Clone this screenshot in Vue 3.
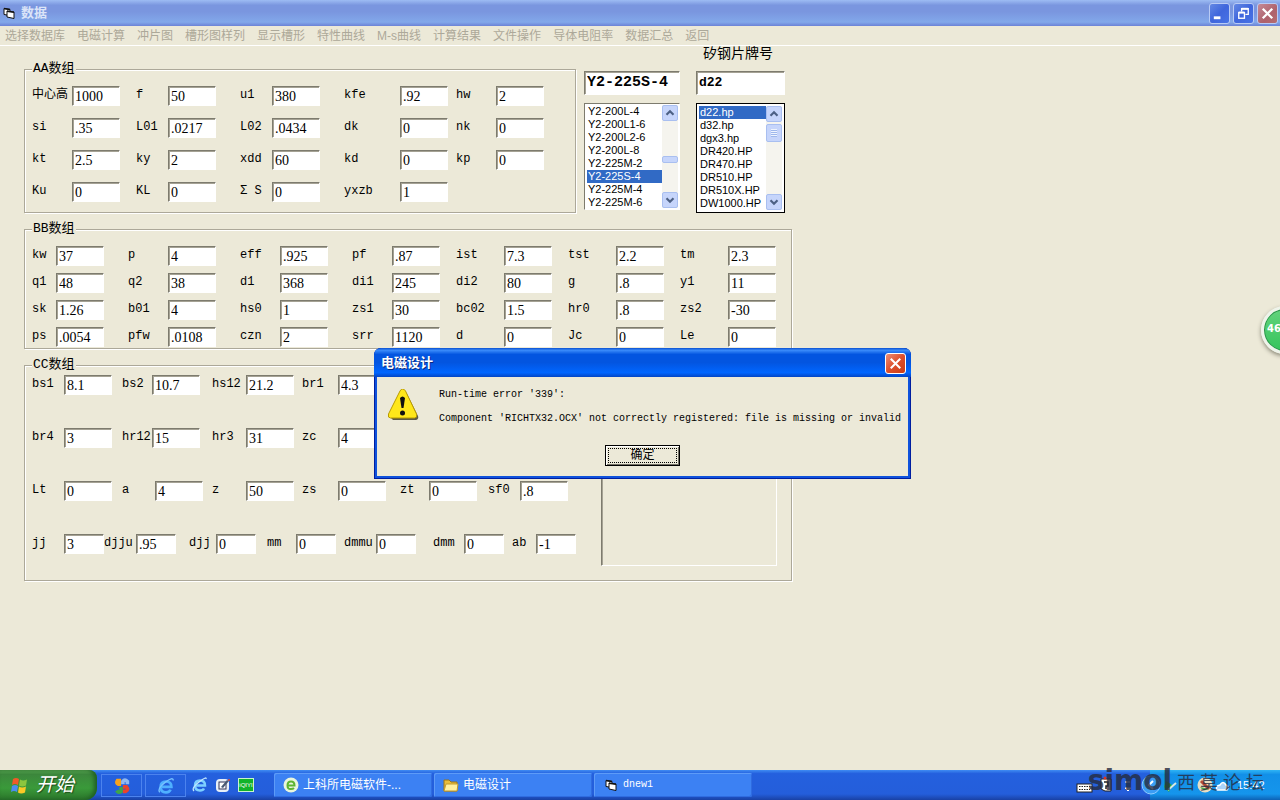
<script setup>
import { ref } from 'vue'

const menu = ['选择数据库', '电磁计算', '冲片图', '槽形图样列', '显示槽形', '特性曲线', 'M-s曲线', '计算结果', '文件操作', '导体电阻率', '数据汇总', '返回']

const groupA = ref([
  ['中心高', '1000'], ['f', '50'], ['u1', '380'], ['kfe', '.92'], ['hw', '2'],
  ['si', '.35'], ['L01', '.0217'], ['L02', '.0434'], ['dk', '0'], ['nk', '0'],
  ['kt', '2.5'], ['ky', '2'], ['xdd', '60'], ['kd', '0'], ['kp', '0'],
  ['Ku', '0'], ['KL', '0'], ['Σ S', '0'], ['yxzb', '1']
])

const groupB = ref([
  ['kw', '37'], ['p', '4'], ['eff', '.925'], ['pf', '.87'], ['ist', '7.3'], ['tst', '2.2'], ['tm', '2.3'],
  ['q1', '48'], ['q2', '38'], ['d1', '368'], ['di1', '245'], ['di2', '80'], ['g', '.8'], ['y1', '11'],
  ['sk', '1.26'], ['b01', '4'], ['hs0', '1'], ['zs1', '30'], ['bc02', '1.5'], ['hr0', '.8'], ['zs2', '-30'],
  ['ps', '.0054'], ['pfw', '.0108'], ['czn', '2'], ['srr', '1120'], ['d', '0'], ['Jc', '0'], ['Le', '0']
])

const groupC = ref([
  { kind: 'four', fields: [['bs1', '8.1'], ['bs2', '10.7'], ['hs12', '21.2'], ['br1', '4.3']] },
  { kind: 'four', fields: [['br4', '3'], ['hr12', '15'], ['hr3', '31'], ['zc', '4']] },
  { kind: 'six', fields: [['Lt', '0'], ['a', '4'], ['z', '50'], ['zs', '0'], ['zt', '0'], ['sf0', '.8']] },
  { kind: 'seven', fields: [['jj', '3'], ['djju', '.95'], ['djj', '0'], ['mm', '0'], ['dmmu', '0'], ['dmm', '0'], ['ab', '-1']] }
])

const models = ['Y2-200L-4', 'Y2-200L1-6', 'Y2-200L2-6', 'Y2-200L-8', 'Y2-225M-2', 'Y2-225S-4', 'Y2-225M-4', 'Y2-225M-6']
const steels = ['d22.hp', 'd32.hp', 'dgx3.hp', 'DR420.HP', 'DR470.HP', 'DR510.HP', 'DR510X.HP', 'DW1000.HP']
const model = ref('Y2-225S-4')
const steel = ref('d22.hp')
const modelName = ref('Y2-225S-4')
const steelName = ref('d22')
</script>

<template>
  <div class="screen">
    <header class="titlebar">
      <svg class="app-icon" viewBox="0 0 12 12"><path d="M1 1.500l6 1v6l-6-1z" fill="#fff" stroke="#111" /><path d="M4 4l7 1v6.500l-7-1.500z" fill="#fff" stroke="#111" /><path d="M1 1.500l6 1M4 4.300l7 1" stroke="#111" stroke-width="1.500" /></svg>
      <h1>数据</h1>
      <div class="window-buttons">
        <button class="wbtn" aria-label="最小化"><svg viewBox="0 0 20 20"><path d="M4 14.5h7" stroke="#fff" stroke-width="3" /></svg></button>
        <button class="wbtn" aria-label="还原"><svg viewBox="0 0 20 20" fill="none" stroke="#fff"><path d="M8 8V5h7v6h-3" stroke-width="1.4" /><path d="M8 5h7" stroke-width="2" /><rect x="5" y="9" width="6" height="6" stroke-width="1.4" /><path d="M5 9h6" stroke-width="2" /></svg></button>
        <button class="wbtn dim-close" aria-label="关闭"><svg viewBox="0 0 20 20"><path d="M5 5l10 10M15 5L5 15" stroke="#fff" stroke-width="2.4" /></svg></button>
      </div>
    </header>

    <nav class="menubar">
      <button v-for="m in menu" :key="m">{{ m }}</button>
    </nav>

    <main class="form">
      <div class="top">
        <fieldset class="group group-a">
          <legend>AA数组</legend>
          <div class="fields cols-a">
            <template v-for="(f, i) in groupA" :key="f[0]">
              <label :for="'a' + i">{{ f[0] }}</label>
              <input :id="'a' + i" v-model="f[1]" type="text">
            </template>
          </div>
        </fieldset>

        <section class="picker model">
          <input v-model="modelName" class="name large" type="text" aria-label="型号">
          <div class="listbox">
            <select v-model="model" size="8" aria-label="型号列表">
              <option v-for="m in models" :key="m" :value="m">{{ m }}</option>
            </select>
            <div class="scroll">
              <button aria-label="向上"><svg viewBox="0 0 16 16"><path d="M4 10l4-4 4 4" /></svg></button>
              <span class="thumb short"></span>
              <button aria-label="向下"><svg viewBox="0 0 16 16"><path d="M4 6l4 4 4-4" /></svg></button>
            </div>
          </div>
        </section>

        <section class="picker steel">
          <label for="steel-name">矽钢片牌号</label>
          <input id="steel-name" v-model="steelName" class="name" type="text">
          <div class="listbox focused">
            <select v-model="steel" size="8" aria-label="矽钢片列表">
              <option v-for="s in steels" :key="s" :value="s">{{ s }}</option>
            </select>
            <div class="scroll">
              <button aria-label="向上"><svg viewBox="0 0 16 16"><path d="M4 10l4-4 4 4" /></svg></button>
              <span class="thumb"></span>
              <button aria-label="向下"><svg viewBox="0 0 16 16"><path d="M4 6l4 4 4-4" /></svg></button>
            </div>
          </div>
        </section>
      </div>

      <fieldset class="group group-b">
        <legend>BB数组</legend>
        <div class="fields cols-b">
          <template v-for="(f, i) in groupB" :key="f[0]">
            <label :for="'b' + i">{{ f[0] }}</label>
            <input :id="'b' + i" v-model="f[1]" type="text">
          </template>
        </div>
      </fieldset>

      <fieldset class="group group-c">
        <legend>CC数组</legend>
        <div class="c-body">
          <div class="c-rows">
            <div v-for="(row, r) in groupC" :key="r" class="fields" :class="row.kind">
              <template v-for="(f, i) in row.fields" :key="f[0]">
                <label :for="'c' + r + i">{{ f[0] }}</label>
                <input :id="'c' + r + i" v-model="f[1]" type="text">
              </template>
            </div>
          </div>
          <div class="canvas"></div>
        </div>
      </fieldset>
    </main>

    <footer class="taskbar">
      <button class="start">
        <svg viewBox="0 0 20 20"><path d="M3 4q3-2 6 0l-1 6q-3-2-6 0z" fill="#f05a28" /><path d="M10 4.500q3 2 7 0l-1 6q-4 2-7 0z" fill="#8cc63e" /><path d="M2 11q3-2 6 0l-1 6q-3-2-6 0z" fill="#4c8df0" /><path d="M9 11.500q3 2 7 0l-1 6q-4 2-7 0z" fill="#fbc926" /></svg>
        <span>开始</span>
      </button>
      <div class="pinned">
        <button aria-label="360"><svg viewBox="0 0 20 20" fill="none" stroke-width="4"><path d="M9 8H6q-3-1-1-4h4" stroke="#f6a21c" /><path d="M11 8V5q2-3 5 0v3" stroke="#8fb8f2" /><path d="M9 11v5q-3 2-5-1" stroke="#3fa64a" /><path d="M11 11h4q3 3-1 5h-3" stroke="#e8432c" /></svg></button>
        <button aria-label="浏览器"><svg viewBox="0 0 20 20" fill="none"><path d="M5 11h11q0-6-6-6t-6 6 6 6q4 0 5-3" stroke="#4fb0ff" stroke-width="3" /><path d="M3 17Q0 13 9 6t9-2" stroke="#76c3ff" stroke-width="1.500" /></svg></button>
      </div>
      <div class="quick">
        <button aria-label="Internet Explorer"><svg viewBox="0 0 16 16" fill="none"><path d="M4 8.500h9q0-5-5-5t-5 5 5 5q3 0 4-2" stroke="#7ed0ff" stroke-width="2.500" /><path d="M2 14Q-1 11 7 5t7-3" stroke="#bfe6ff" stroke-width="1.300" /></svg></button>
        <button aria-label="显示桌面"><svg viewBox="0 0 16 16"><rect x="1" y="2" width="13" height="13" rx="4" fill="#e8f0f8" /><rect x="4" y="5" width="7" height="7" fill="#fff" stroke="#335" /><path d="M6 10l6-7 2 1-6 7z" fill="#4a5a74" /><circle cx="14" cy="3" r="1" fill="#e04030" /></svg></button>
        <button class="qiyi" aria-label="爱奇艺">iQIYI</button>
      </div>
      <div class="tasks">
        <button>
          <svg viewBox="0 0 16 16"><circle cx="8" cy="8" r="7.500" fill="#e9f6dc" /><path d="M4.500 8.500h7q0-4-3.500-4t-3.500 4 3.500 3.500q2 0 3-1" fill="none" stroke="#5cb531" stroke-width="2" /></svg>
          <span>上科所电磁软件-...</span>
        </button>
        <button>
          <svg viewBox="0 0 16 16"><path d="M1 3h5l2 2h6v9H1z" fill="#e8bd3c" stroke="#9c7416" /><path d="M3 7h12l-1 7H1z" fill="#fff0a0" stroke="#c39a2c" /></svg>
          <span>电磁设计</span>
        </button>
        <button>
          <svg viewBox="0 0 16 16"><path d="M3 3.500l6 1v6l-6-1z" fill="#fff" stroke="#111" /><path d="M6 6l7 1v6.500l-7-1.500z" fill="#fff" stroke="#111" /><path d="M3 3.500l6 1M6 6.300l7 1" stroke="#111" stroke-width="1.500" /></svg>
          <span class="latin">dnew1</span>
        </button>
      </div>
      <div class="tray">
        <div class="lang">
          <svg viewBox="0 0 64 20"><rect x="1" y="9" width="15" height="8" fill="#fff" stroke="#222" /><path d="M3 11.500h11M3 14.500h11" stroke="#222" stroke-dasharray="1.500 1" /><path d="M25 4h10v12h-6l-4-2z" fill="#fff" stroke="#222" /><path d="M28 7h4v4h-2v3" fill="none" stroke="#222" stroke-width="1.500" /><circle cx="29" cy="3" r="1.500" fill="#d32" /><path d="M49 7h5M49 13h6l-3 3z" stroke="#fff" fill="#fff" /></svg>
        </div>
        <div class="notify">
          <svg viewBox="0 0 84 20"><circle cx="1" cy="10" r="9" fill="#3b9df5" stroke="#8dcbff" /><path d="M3 6l-4 4 4 4" stroke="#fff" stroke-width="2" fill="none" /><path d="M16 6l6 4-3 7-5-5z" fill="#27a844" /><path d="M18 15l8-7" stroke="#d8e8df" stroke-width="2" /><circle cx="55" cy="10" r="7.500" fill="#e9ddc2" /><path d="M51 6l8 8" stroke="#b44a33" stroke-width="3" /><path d="M50 12q3 5 9 2z" fill="#4eaa48" /><path d="M67 15h10q3-3-1-5-3-5-6 0-5 1-3 5z" fill="#a9d4fa" stroke="#fff" stroke-width="1.500" /></svg>
          <time>15:42</time>
        </div>
        <div class="watermark"><b>simol</b><span v-for="c in '西莫论坛'" :key="c">{{ c }}</span></div>
      </div>
    </footer>

    <aside class="speed">46</aside>

    <div class="modal-layer">
      <section class="dialog" role="alertdialog" aria-labelledby="dlg-title">
        <header>
          <h2 id="dlg-title">电磁设计</h2>
          <button class="wbtn close" aria-label="关闭"><svg viewBox="0 0 20 20"><path d="M5 5l10 10M15 5L5 15" stroke="#fff" stroke-width="2.200" /></svg></button>
        </header>
        <div class="message">
          <svg viewBox="0 0 32 32"><path d="M16 3q2 0 3 2l11 22q1 3-2 4H5l-2-2z" fill="#5d5a45" /><path d="M14.500 0q2 0 3 2l11 23q1 4-2 4h-24q-3 0-2-4L12 2q1-2 2.500-2z" fill="#ffe71a" stroke="#b99a00" /><path d="M12 9q2.500-3 5 0l-1.500 10h-2z" fill="#111" /><circle cx="14.500" cy="24" r="2.500" fill="#111" /></svg>
          <div class="lines">
            <p>Run-time error '339':</p>
            <p>Component 'RICHTX32.OCX' not correctly registered: file is missing or invalid</p>
          </div>
        </div>
        <button class="ok"><span>确定</span></button>
      </section>
    </div>
  </div>
</template>

<style>
body {
  margin: 0;
  background: #ece9d8;
}
</style>

<style scoped>
.screen {
  position: relative;
  display: flex;
  flex-direction: column;
  min-height: 100vh;
  overflow: hidden;
  background: #ece9d8;
  color: #000;
  font: 12px/16px "Liberation Sans", "Noto Sans CJK SC", sans-serif;
}
* { box-sizing: border-box; }
button {
  padding: 0;
  border: 0;
  background: none;
  color: inherit;
  font: inherit;
}
svg { display: block; }

.titlebar {
  display: flex;
  align-items: center;
  gap: 6px;
  height: 26px;
  padding: 0 2px 0 3px;
  background: linear-gradient(#9dbcf3, #7a96df 20%, #7a96df 45%, #82a8ea 85%, #6b82d6);
}
.app-icon { width: 12px; height: 12px; }
.titlebar h1 {
  flex: 1;
  margin: 0;
  color: #dbe4f8;
  font-size: 13px;
  font-weight: bold;
}
.window-buttons { display: flex; gap: 3px; }
.wbtn {
  width: 21px;
  height: 21px;
  border: 1px solid #b9cbf5;
  border-radius: 3px;
  background: linear-gradient(135deg, #6488e4, #3f66dc 50%, #4873e6);
}
.wbtn svg { width: 19px; height: 19px; }
.dim-close { background: linear-gradient(135deg, #c58a96, #ae626c 60%, #b66d70); }

.menubar {
  display: flex;
  gap: 12px;
  height: 20px;
  padding: 0 5px;
  border-bottom: 1px solid #fff;
  color: #aca899;
}

.form {
  flex: 1;
  display: flex;
  flex-direction: column;
  align-items: flex-start;
  gap: 8px;
  padding: 0 24px;
}
.top { display: flex; align-items: flex-start; }
.group {
  min-width: 0;
  margin: 0;
  border: 1px solid #aca899;
  box-shadow: 1px 1px 0 #fff, inset 1px 1px 0 #fff;
}
.group legend {
  height: 16px;
  padding: 0 1px;
  background: #ece9d8;
  font: 13px/16px "Liberation Mono", "Noto Sans CJK SC", monospace;
}
.group-a { width: 552px; margin-top: 15px; padding: 9px 7px 10px; }
.group-b { width: 768px; padding: 9px 7px 1px; }
.group-c { width: 768px; padding: 2px 7px 14px; }

.fields { display: grid; align-items: center; }
.fields label {
  padding-bottom: 3px;
  font: 12px/16px "Liberation Mono", "Noto Sans CJK SC", monospace;
  white-space: nowrap;
}
input {
  width: 48px;
  height: 20px;
  padding: 1px 0 0 2px;
  border: 1px solid;
  border-color: #7d7b6e #fff #fff #7d7b6e;
  border-radius: 0;
  outline: 0;
  background: #fff;
  box-shadow: inset 1px 1px 0 #a5a294;
  color: #000;
  font: 14px/16px "Liberation Serif", "Noto Sans CJK SC", serif;
}
.cols-a {
  grid-template-columns: 40px 64px 32px 72px 32px 72px 56px 56px 40px 48px;
  row-gap: 12px;
}
.cols-b {
  grid-template-columns: 24px 72px 40px 72px 40px 72px 40px 64px 48px 64px 48px 64px 48px 48px;
  row-gap: 7px;
}
.c-body { display: flex; gap: 24px; }
.c-rows {
  display: flex;
  flex-direction: column;
  gap: 33px;
  width: 545px;
  padding-bottom: 12px;
}
.four { grid-template-columns: 32px 58px 30px 60px 34px 56px 36px 48px; }
.six { grid-template-columns: 32px 58px 33px 57px 34px 56px 36px 62px 29px 59px 32px 48px; }
.seven { grid-template-columns: 32px 40px 32px 53px 27px 51px 29px 48px 32px 57px 31px 48px 24px 40px; }
.seven input { width: 40px; }
.canvas {
  width: 176px;
  border: 1px solid;
  border-color: #7d7b6e #fff #fff #7d7b6e;
  box-shadow: inset 1px 0 0 #a5a294;
}

.picker { display: flex; flex-direction: column; }
.model { width: 96px; margin-left: 8px; padding-top: 25px; }
.steel { width: 89px; margin-left: 16px; }
.picker label {
  height: 25px;
  padding-left: 7px;
  font-size: 14px;
  line-height: 14px;
  white-space: nowrap;
}
.name {
  width: 100%;
  height: 24px;
  margin-bottom: 8px;
  padding: 0 0 2px 2px;
  font: bold 13px/20px "Liberation Mono", monospace;
}
.name.large { font-size: 15px; }
.listbox {
  display: flex;
  height: 107px;
  padding: 1px 1px 1px 2px;
  border: 1px solid;
  border-color: #7d7b6e #fff #fff #7d7b6e;
  background: #fff;
}
.listbox.focused {
  height: 110px;
  padding: 2px;
  border-color: #000;
}
select {
  flex: 1;
  min-width: 0;
  height: 104px;
  padding: 0;
  border: 0;
  border-radius: 0;
  outline: 0;
  overflow: hidden;
  scrollbar-width: none;
  background: #fff;
  font: 11px/13px "Liberation Sans", sans-serif;
}
option {
  height: 13px;
  min-height: 13px;
  padding: 0 0 0 1px;
  color: #000;
  font: 11px/13px "Liberation Sans", sans-serif;
}
option:checked {
  background: linear-gradient(#316ac5, #316ac5);
  -webkit-text-fill-color: #fff;
}
.scroll {
  display: flex;
  flex-direction: column;
  width: 16px;
  background: #f5f4ee;
}
.scroll button {
  height: 16px;
  border: 1px solid #a9bff0;
  border-radius: 2px;
  background: #c6d5fb;
}
.scroll button:last-child { margin-top: auto; }
.scroll svg {
  width: 14px;
  height: 14px;
  fill: none;
  stroke: #4d6185;
  stroke-width: 2.5;
}
.thumb {
  height: 18px;
  margin-top: 2px;
  border: 1px solid #a9bff0;
  border-radius: 2px;
  background: repeating-linear-gradient(#eef4fe 0 1px, #9fb8ec 1px 2px) center / 6px 8px no-repeat #c6d5fb;
}
.thumb.short { height: 7px; margin-top: 35px; background: #c6d5fb; }

.taskbar {
  display: flex;
  align-items: stretch;
  height: 30px;
  background: linear-gradient(#3f8cf3, #2460de 12%, #245edb 80%, #1941a5);
  color: #fff;
}
.start {
  display: flex;
  align-items: center;
  gap: 6px;
  width: 97px;
  padding-left: 10px;
  border-radius: 0 8px 12px 0;
  background: linear-gradient(#5eac56, #3c873c 15%, #3a9a3a 60%, #2b752b);
  box-shadow: inset -3px 0 4px #1f5f24;
  text-shadow: 1px 1px 1px #1b4a1b;
}
.start svg { width: 20px; height: 20px; }
.start span { font-size: 19px; font-style: italic; }
.pinned { display: flex; gap: 3px; padding: 4px 0 3px 4px; }
.pinned button {
  display: grid;
  place-items: center;
  width: 41px;
  border: 1px solid #4c83ee;
}
.pinned svg { width: 18px; height: 18px; }
.quick {
  display: flex;
  align-items: center;
  gap: 7px;
  padding-left: 6px;
}
.quick svg { width: 16px; height: 16px; }
.qiyi {
  width: 16px;
  height: 14px;
  border: 1px solid #c9f3cd;
  background: #12b32a;
  font-size: 6px;
  line-height: 10px;
  white-space: nowrap;
}
.tasks { display: flex; gap: 2px; padding: 3px 0 3px 20px; }
.tasks button {
  display: flex;
  align-items: center;
  gap: 4px;
  width: 158px;
  padding-left: 9px;
  border-radius: 2px;
  background: #3c81f3;
  box-shadow: inset 1px 1px 0 #5d9bf8, inset -1px -1px 0 #2f6ce0;
  white-space: nowrap;
}
.tasks svg { width: 16px; height: 16px; }
.latin { font: 10px/16px "Liberation Mono", monospace; }
.tray {
  position: relative;
  display: flex;
  margin-left: auto;
}
.lang svg { width: 64px; height: 20px; margin: 5px 10px 0 0; }
.notify {
  display: flex;
  align-items: center;
  width: 130px;
  background: linear-gradient(#2fb4f5, #1290e8 15%, #1595ec 80%, #0d62b5);
}
.notify svg { width: 84px; height: 20px; overflow: visible; }
.notify time { padding-left: 3px; font-size: 11px; }
.watermark {
  position: absolute;
  right: 16px;
  top: 0;
  display: flex;
  align-items: center;
  gap: 5px;
  height: 22px;
  color: #262b3d;
  opacity: 0.8;
  white-space: nowrap;
}
.watermark b { font: bold 28px/22px "DejaVu Sans", sans-serif; }
.watermark span { font: 18px/22px "Noto Sans CJK SC", sans-serif; }

.speed {
  position: absolute;
  top: 306px;
  right: -29px;
  width: 48px;
  height: 48px;
  padding-left: 3px;
  border: 3px solid #eef3ea;
  border-radius: 50%;
  background: linear-gradient(#63d37c, #35c45c);
  box-shadow: inset 0 0 0 1px #2b8f4a, 0 2px 4px #8a8878;
  color: #fff;
  font: bold 10px/40px "DejaVu Sans", sans-serif;
}

.modal-layer {
  position: absolute;
  inset: 0;
  display: flex;
  align-items: flex-start;
  justify-content: center;
  padding: 348px 0 0 5px;
}
.dialog {
  padding: 0 3px 3px;
  border-radius: 7px 7px 0 0;
  background: #ece9d8;
  box-shadow: inset 0 0 0 1px #001ea0, inset 0 0 0 3px #0f52dc;
}
.dialog header {
  display: flex;
  align-items: center;
  height: 29px;
  margin: 0 -3px;
  padding: 1px 5px 0 7px;
  border-radius: 7px 7px 0 0;
  background: linear-gradient(#0a4fd0, #3a8bfa 8%, #0355e0 22%, #0355e0 50%, #0066ff 85%, #0345c4);
}
.dialog h2 {
  flex: 1;
  margin: 0;
  color: #fff;
  font-size: 13px;
  font-weight: bold;
  line-height: 18px;
  text-shadow: 1px 1px 0 #0a2a80;
}
.close {
  border-color: #fff;
  background: linear-gradient(135deg, #ec8f78, #dd4f2c 50%, #c93c17);
}
.message {
  display: flex;
  gap: 19px;
  padding: 10px 7px 0 11px;
}
.message svg { width: 32px; height: 32px; margin-top: 2px; }
.lines p {
  margin: 0 0 8px;
  font: 10px/16px "Liberation Mono", monospace;
  white-space: nowrap;
}
.ok {
  display: block;
  width: 75px;
  height: 21px;
  margin: 10px auto 10px;
  padding: 2px;
  border: 1px solid #000;
  background: #ece9d8;
  box-shadow: inset 1px 1px 0 #fff, inset -1px -1px 0 #716f64;
}
.ok span {
  display: block;
  border: 1px dotted #000;
  line-height: 13px;
}
</style>
